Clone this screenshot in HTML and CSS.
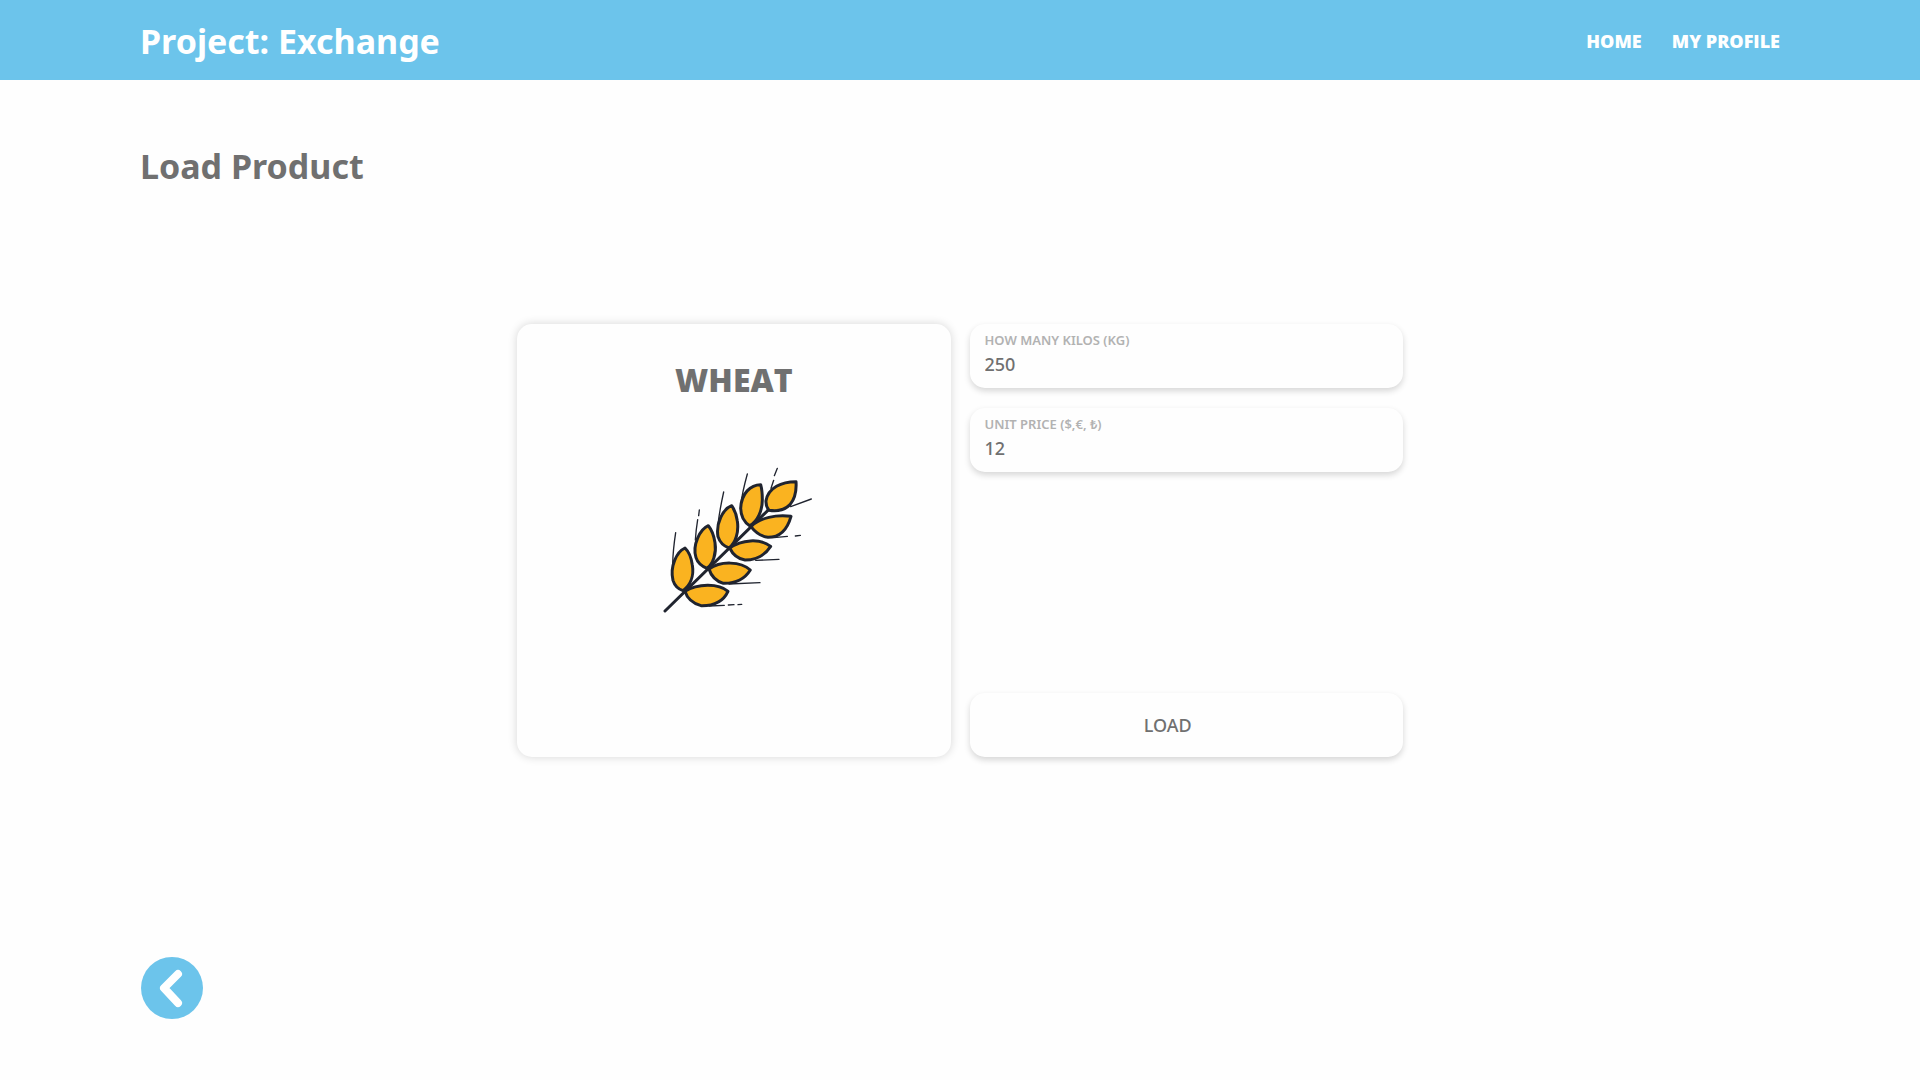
FILE: index.html
```html
<!DOCTYPE html>
<html lang="en">
<head>
<meta charset="utf-8">
<meta name="viewport" content="width=device-width, initial-scale=1">
<title>Project: Exchange</title>
<link rel="stylesheet" href="styles.css">
</head>
<body>
<header class="topbar">
  <a class="brand" href="#">Project: Exchange</a>
  <nav class="nav">
    <a class="nav-link" href="#">HOME</a>
    <a class="nav-link" href="#">MY PROFILE</a>
  </nav>
</header>
<main class="page">
  <h1 class="title">Load Product</h1>
  <form class="product">
    <section class="card">
      <h2 class="card-title">WHEAT</h2>
      <svg class="wheat" viewBox="15 30 480 480" aria-hidden="true">
        <g class="awns">
          <path d="M80 248Q72 300 71 342M151 180L149 197M146 209Q141 240 139 270M224 126Q212 180 207 222M295 72Q279 130 276 162M385 55L376 77M374 91L366 115M425 170L487 147M375 263L415 259M439 258L454 256M320 331L390 328M240 402L333 398M180 468L226 466M238 465L255 464M267 464L278 463"/>
        </g>
        <path class="stem" d="M48 483L362 176"/>
        <g class="grains">
          <path d="M108 294C83 305 62 350 72 391Q79 414 102 422C122 407 136 380 130 345Q125 310 108 294Z"/>
          <path d="M178 227C153 238 129 285 141 323Q148 345 174 355C192 342 203 310 198 278Q193 245 178 227Z"/>
          <path d="M248 167C222 177 200 220 207 260Q215 285 240 294C260 279 270 246 265 213Q262 187 248 167Z"/>
          <path d="M335 104C305 104 277 130 275 175Q276 211 302 227C327 214 340 180 340 149Q340 122 335 104Z"/>
          <path d="M441 95C398 95 358 113 351 152Q350 170 360 181C383 185 407 180 423 164Q444 138 441 95Z"/>
          <path d="M426 199C382 194 333 202 306 230Q327 258 357 262C389 262 413 246 426 199Z"/>
          <path d="M365 289C333 264 277 269 242 294Q257 325 288 330C322 330 347 317 365 289Z"/>
          <path d="M304 360C275 334 215 332 180 357Q190 390 223 400C261 401 287 387 304 360Z"/>
          <path d="M237 424C209 399 145 400 108 424Q118 456 156 467C199 468 224 452 237 424Z"/>
        </g>
      </svg>
    </section>
    <div class="fields">
      <div class="field">
        <label class="label" for="kilos">HOW MANY KILOS (KG)</label>
        <input class="input" id="kilos" type="text" inputmode="numeric" value="250">
      </div>
      <div class="field">
        <label class="label" for="price">UNIT PRICE ($,€, ₺)</label>
        <input class="input" id="price" type="text" inputmode="decimal" value="12">
      </div>
      <button class="load" type="button">LOAD</button>
    </div>
  </form>
  <a class="back" href="#" aria-label="Back">
    <svg class="back-icon" viewBox="0 0 62 62" aria-hidden="true">
      <circle cx="31" cy="31" r="31"/>
      <path d="M37 17L23 31L37 46"/>
    </svg>
  </a>
</main>
</body>
</html>
```
FILE: styles.css
```css
* {
  box-sizing: border-box;
}

body {
  margin: 0;
  min-height: 100vh;
  display: flex;
  flex-direction: column;
  background: #fefefe;
  color: #707070;
  font-family: "Noto Sans", "Open Sans", sans-serif;
}

a {
  color: inherit;
  text-decoration: none;
}

.topbar {
  display: flex;
  align-items: center;
  justify-content: space-between;
  height: 80px;
  padding: 2px 140px 0;
  background: #6cc4eb;
  color: #fff;
}

.brand,
.title {
  font-size: 34px;
  font-weight: 700;
  line-height: 48px;
}

.nav {
  display: flex;
  gap: 30px;
}

.nav-link {
  font-family: "Open Sans", sans-serif;
  font-size: 18px;
  font-weight: 800;
  line-height: 24px;
}

.page {
  flex: 1;
  display: flex;
  flex-direction: column;
  padding: 62px 140px 61px;
}

.title {
  margin: 0;
}

.product {
  display: grid;
  grid-template-columns: 1fr 1fr;
  gap: 19px;
  width: 54%;
  margin: 134px auto 0;
}

.card {
  display: flex;
  flex-direction: column;
  align-items: center;
  gap: 60px;
  aspect-ratio: 1;
  padding-top: 36px;
  border-radius: 15px;
  background: #fefefe;
  box-shadow: 0 0 10px rgba(0, 0, 0, 0.16);
}

.card-title {
  margin: 0;
  font-family: "Open Sans", sans-serif;
  font-size: 32px;
  font-weight: 800;
  line-height: 40px;
}

.wheat {
  width: 160px;
  height: 160px;
  stroke: #20242f;
  stroke-linecap: round;
  stroke-linejoin: round;
}

.awns {
  fill: none;
  stroke-width: 4;
}

.stem {
  stroke-width: 9;
}

.grains {
  fill: #fab320;
  stroke-width: 9;
}

.fields {
  display: flex;
  flex-direction: column;
  gap: 20px;
}

.field,
.load {
  height: 64px;
  border: 0;
  border-radius: 15px;
  background: #fefefe;
  box-shadow: 0 3px 6px rgba(0, 0, 0, 0.16);
}

.field {
  display: flex;
  flex-direction: column;
  padding: 7px 15px;
}

.label {
  color: #b2b2b2;
  font-size: 13px;
  font-weight: 600;
  line-height: 18px;
}

.input {
  width: 100%;
  height: 30px;
  padding: 0;
  border: 0;
  outline: 0;
  background: none;
  color: inherit;
  font: 500 18px/30px "Noto Sans", "Open Sans", sans-serif;
}

.load {
  margin-top: auto;
  padding: 0 37px 0 0;
  color: inherit;
  font: 500 18px/24px "Noto Sans", "Open Sans", sans-serif;
  cursor: pointer;
}

.back {
  align-self: flex-start;
  height: 62px;
  margin: auto 0 0 1px;
}

.back-icon {
  display: block;
  width: 62px;
  height: 62px;
  fill: #6cc4eb;
}

.back-icon path {
  fill: none;
  stroke: #fff;
  stroke-width: 8;
  stroke-linecap: round;
  stroke-linejoin: round;
}
```
